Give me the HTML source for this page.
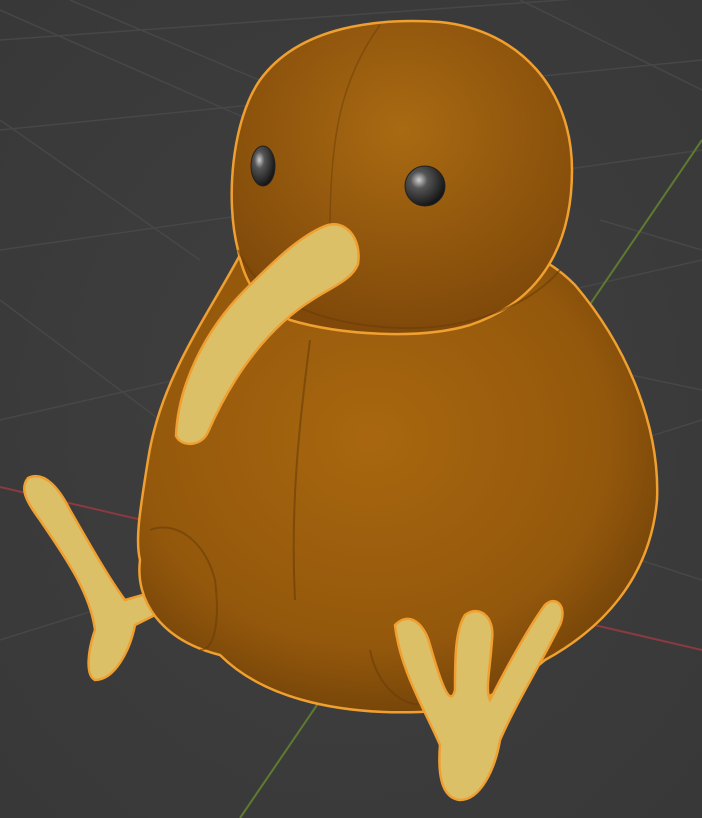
<!DOCTYPE html>
<html><head><meta charset="utf-8"><style>html,body{margin:0;padding:0;background:#3d3d3d;width:702px;height:818px;overflow:hidden}</style></head>
<body>
<svg width="702" height="818" viewBox="0 0 702 818" xmlns="http://www.w3.org/2000/svg">
<defs>
<radialGradient id="bg" cx="0.5" cy="0.5" r="0.7"><stop offset="0" stop-color="#404040"/><stop offset="1" stop-color="#383838"/></radialGradient>
<radialGradient id="body" cx="0.45" cy="0.4" r="0.65"><stop offset="0" stop-color="#a8670f"/><stop offset="0.7" stop-color="#94580c"/><stop offset="1" stop-color="#6e4008"/></radialGradient>
<radialGradient id="head" cx="0.5" cy="0.35" r="0.65"><stop offset="0" stop-color="#a96a12"/><stop offset="1" stop-color="#80490a"/></radialGradient>
<radialGradient id="eye" cx="0.35" cy="0.35" r="0.7"><stop offset="0" stop-color="#d0d0d0"/><stop offset="0.3" stop-color="#555"/><stop offset="1" stop-color="#111"/></radialGradient>
</defs>
<rect width="702" height="818" fill="url(#bg)"/>
<g stroke="#474747" stroke-width="1.5" fill="none">
<path d="M0,40 L702,-10 M0,130 L702,60 M0,250 L702,150 M0,420 L702,260 M0,640 L702,420"/>
<path d="M0,10 L250,120 M0,120 L200,260 M70,0 L330,110 M0,300 L160,420 M520,0 L702,90 M600,220 L702,250 M560,360 L702,390 M640,560 L702,580"/>
</g>
<path d="M0,487 L702,650" stroke="#8a3a40" stroke-width="2"/>
<path d="M702,140 L240,818" stroke="#5e7a30" stroke-width="2"/>
<path d="M28,478 C45,470 60,490 70,510 C90,545 110,580 125,600 L160,590 L165,610 L135,625 C130,650 115,680 95,680 C85,675 88,650 95,630 C90,590 60,550 40,520 C25,500 20,488 28,478 Z" fill="#dcc068" stroke="#f0a030" stroke-width="2.5"/>
<path d="M240,255 C205,320 160,380 148,460 C140,510 135,540 140,560 C135,600 160,640 220,655 C260,695 330,715 420,712 C470,710 510,690 545,660 C600,630 650,580 657,500 C660,430 630,350 575,285 C560,270 545,260 530,255 Z" fill="url(#body)" stroke="#f0a030" stroke-width="2.5"/>
<path d="M238,250 C225,200 232,120 260,80 C300,25 380,18 440,22 C520,30 572,90 572,170 C572,240 545,300 470,325 C420,340 340,335 290,320 C260,305 245,285 238,250 Z" fill="url(#head)" stroke="#f0a030" stroke-width="2.5"/>
<path d="M238,250 C260,300 320,325 400,328 C470,330 530,305 560,270" stroke="#6a3d08" stroke-width="2" fill="none" opacity="0.6"/>
<path d="M380,25 C340,80 330,140 330,230" stroke="#6a3d08" stroke-width="1.5" fill="none" opacity="0.5"/>
<path d="M310,340 C300,420 290,500 295,600" stroke="#5e3606" stroke-width="2" fill="none" opacity="0.5"/>
<path d="M150,530 C175,520 205,540 215,580 C220,620 215,650 200,650" stroke="#6a3d08" stroke-width="2" fill="none" opacity="0.6"/>
<path d="M370,650 C380,700 420,712 430,700" stroke="#6a3d08" stroke-width="2" fill="none" opacity="0.6"/>
<ellipse cx="263" cy="166" rx="12" ry="20" fill="url(#eye)" stroke="#222" stroke-width="1"/>
<ellipse cx="425" cy="186" rx="20" ry="20" fill="url(#eye)" stroke="#222" stroke-width="1"/>
<path d="M325,226 C345,218 362,238 358,264 C352,280 330,288 312,300 C272,325 235,370 208,432 C202,446 182,448 176,436 C178,385 205,330 245,290 C275,260 300,236 325,226 Z" fill="#dcc068" stroke="#f0a030" stroke-width="2.5"/>
<path d="M395,625 C410,610 425,625 430,645 C440,680 450,710 455,690 C455,660 455,630 465,615 C478,605 495,615 492,640 C490,670 485,690 490,700 C505,670 530,625 545,605 C555,595 568,605 560,625 C540,665 515,705 500,740 C495,770 480,800 460,800 C440,798 438,770 440,745 C425,710 400,670 395,625 Z" fill="#dcc068" stroke="#f0a030" stroke-width="2.5"/>
</svg>
</body></html>
